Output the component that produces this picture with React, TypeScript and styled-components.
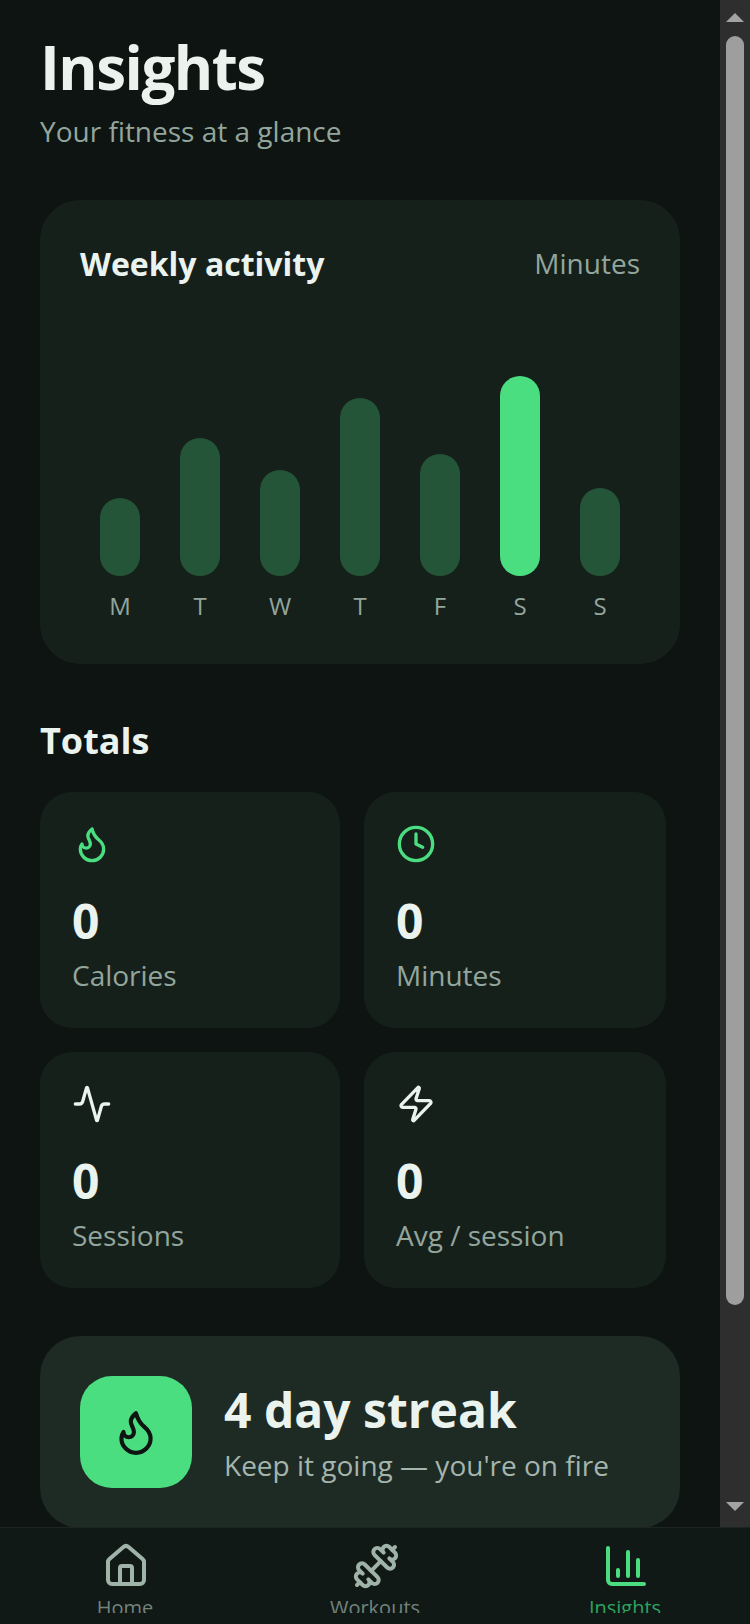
import styled, { createGlobalStyle } from 'styled-components'
import { Activity, ChartColumn, Clock, Dumbbell, Flame, House, Zap } from 'lucide-react'

const GlobalStyle = createGlobalStyle`
  html, body {
    margin: 0;
    padding: 0;
    background: #0d1411;
  }
  * {
    box-sizing: border-box;
  }
`

const Screen = styled.div`
  width: 750px;
  height: 1624px;
  display: flex;
  flex-direction: column;
  overflow: hidden;
  background: #0d1411;
  font-family: "Open Sans", "Liberation Sans", sans-serif;
  color: #eaf3ee;
`

const Viewport = styled.div`
  flex: 1;
  min-height: 0;
  display: flex;
`

const Pane = styled.main`
  flex: 1;
  min-width: 0;
  overflow: hidden;
  padding: 26px 40px 0;
`

const Scrollbar = styled.div`
  width: 30px;
  flex: none;
  display: flex;
  flex-direction: column;
  align-items: center;
  background: #2e2e2e;
`

const ScrollArrow = styled.div<{ $down?: boolean }>`
  height: 30px;
  flex: none;
  display: flex;
  align-items: ${p => (p.$down ? 'flex-start' : 'flex-end')};
  padding: ${p => (p.$down ? '5px 0 0' : '0 0 8px')};

  &::before {
    content: '';
    border-left: 9px solid transparent;
    border-right: 9px solid transparent;
    ${p => (p.$down ? 'border-top' : 'border-bottom')}: 9px solid #a3a3a3;
  }
`

const ScrollTrack = styled.div`
  flex: 1;
  padding-top: 6px;
`

const ScrollThumb = styled.div`
  width: 18px;
  height: 1269px;
  border-radius: 9px;
  background: #9e9e9e;
`

const Title = styled.h1`
  margin: 0 0 4px;
  font-size: 60px;
  line-height: 82px;
  font-weight: 700;
  letter-spacing: -1.5px;
  color: #eaf3ee;
`

const Subtitle = styled.p`
  margin: 0 0 50px;
  font-size: 28px;
  line-height: 38px;
  color: #93a69d;
`

const ActivityCard = styled.section`
  height: 464px;
  padding: 40px;
  border-radius: 40px;
  background: #16201b;
  display: flex;
  flex-direction: column;
`

const CardHeader = styled.div`
  display: flex;
  justify-content: space-between;
  align-items: center;
`

const CardTitle = styled.h2`
  margin: 0;
  font-size: 32px;
  line-height: 48px;
  font-weight: 700;
  color: #eaf3ee;
`

const Unit = styled.span`
  margin-bottom: 2px;
  font-size: 28px;
  color: #93a69d;
`

const Chart = styled.div`
  margin-top: auto;
  margin-bottom: 2px;
  display: grid;
  grid-template-columns: repeat(7, 1fr);
`

const Column = styled.div`
  display: flex;
  flex-direction: column;
  align-items: center;
  justify-content: flex-end;
  gap: 14px;
`

const Bar = styled.div<{ $active?: boolean; $height: number }>`
  width: 40px;
  height: ${p => p.$height}px;
  border-radius: 20px;
  background: ${p => (p.$active ? '#4ade80' : '#245538')};
`

const DayLabel = styled.span`
  font-size: 24px;
  line-height: 32px;
  color: #93a69d;
`

const SectionTitle = styled.h2`
  margin: 50px 0 24px;
  font-size: 36px;
  line-height: 54px;
  font-weight: 700;
  color: #eaf3ee;
`

const TotalsGrid = styled.div`
  display: grid;
  grid-template-columns: 300px 302px;
  gap: 24px;
`

const StatCard = styled.div<{ $accent: string }>`
  height: 236px;
  padding: 32px;
  border-radius: 32px;
  background: #16201b;
  display: flex;
  flex-direction: column;
  color: ${p => p.$accent};
`

const StatValue = styled.div`
  margin-top: 24px;
  font-size: 48px;
  line-height: 66px;
  font-weight: 700;
  color: #eaf3ee;
`

const StatLabel = styled.div`
  margin-top: 2px;
  font-size: 28px;
  line-height: 38px;
  color: #93a69d;
`

const StreakCard = styled.section`
  margin-top: 48px;
  padding: 40px;
  border-radius: 40px;
  background: #1e2a24;
  display: flex;
  align-items: center;
  gap: 32px;
`

const StreakBadge = styled.div`
  width: 112px;
  height: 112px;
  flex: none;
  border-radius: 32px;
  background: #4ade80;
  color: #0d1411;
  display: flex;
  align-items: center;
  justify-content: center;
`

const StreakTitle = styled.div`
  font-size: 48px;
  line-height: 64px;
  font-weight: 700;
  color: #eaf3ee;
`

const StreakText = styled.div`
  margin: 4px 0 2px;
  font-size: 28px;
  line-height: 38px;
  color: #a4b5ad;
`

const BottomNav = styled.nav`
  height: 97px;
  flex: none;
  display: grid;
  grid-template-columns: repeat(3, 1fr);
  padding-top: 14px;
  background: #111917;
  border-top: 1px solid #1c2522;
`

const NavItem = styled.div<{ $active?: boolean }>`
  height: 71px;
  overflow: hidden;
  display: flex;
  flex-direction: column;
  align-items: center;
  gap: 4px;
  color: ${p => (p.$active ? '#4ade80' : '#9fb3a9')};

  svg {
    flex: none;
    margin-left: 2px;
  }
`

const NavLabel = styled.span<{ $active?: boolean }>`
  font-size: 20px;
  line-height: 28px;
  color: ${p => (p.$active ? '#2ea35f' : '#71837b')};
`

const days = [
  { label: 'M', height: 78 },
  { label: 'T', height: 138 },
  { label: 'W', height: 106 },
  { label: 'T', height: 178 },
  { label: 'F', height: 122 },
  { label: 'S', height: 200, active: true },
  { label: 'S', height: 88 },
]

const stats = [
  { label: 'Calories', Icon: Flame, accent: '#4ade80' },
  { label: 'Minutes', Icon: Clock, accent: '#4ade80' },
  { label: 'Sessions', Icon: Activity, accent: '#eaf3ee' },
  { label: 'Avg / session', Icon: Zap, accent: '#eaf3ee' },
]

const tabs = [
  { label: 'Home', Icon: House },
  { label: 'Workouts', Icon: Dumbbell },
  { label: 'Insights', Icon: ChartColumn, active: true },
]

export default function App() {
  return (
    <Screen>
      <GlobalStyle />
      <Viewport>
        <Pane>
          <Title>Insights</Title>
          <Subtitle>Your fitness at a glance</Subtitle>

          <ActivityCard>
            <CardHeader>
              <CardTitle>Weekly activity</CardTitle>
              <Unit>Minutes</Unit>
            </CardHeader>
            <Chart>
              {days.map((day, i) => (
                <Column key={i}>
                  <Bar $height={day.height} $active={day.active} />
                  <DayLabel>{day.label}</DayLabel>
                </Column>
              ))}
            </Chart>
          </ActivityCard>

          <SectionTitle>Totals</SectionTitle>
          <TotalsGrid>
            {stats.map(({ label, Icon, accent }) => (
              <StatCard key={label} $accent={accent}>
                <Icon size={40} />
                <StatValue>0</StatValue>
                <StatLabel>{label}</StatLabel>
              </StatCard>
            ))}
          </TotalsGrid>

          <StreakCard>
            <StreakBadge>
              <Flame size={50} />
            </StreakBadge>
            <div>
              <StreakTitle>4 day streak</StreakTitle>
              <StreakText>Keep it going — you're on fire</StreakText>
            </div>
          </StreakCard>
        </Pane>
        <Scrollbar>
          <ScrollArrow />
          <ScrollTrack>
            <ScrollThumb />
          </ScrollTrack>
          <ScrollArrow $down />
        </Scrollbar>
      </Viewport>

      <BottomNav>
        {tabs.map(({ label, Icon, active }) => (
          <NavItem key={label} $active={active}>
            <Icon size={48} />
            <NavLabel $active={active}>{label}</NavLabel>
          </NavItem>
        ))}
      </BottomNav>
    </Screen>
  )
}
